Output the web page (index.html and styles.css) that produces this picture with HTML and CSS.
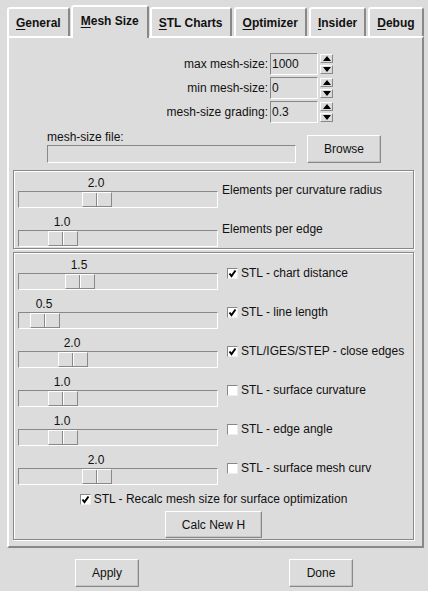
FILE: index.html
```html
<!DOCTYPE html>
<html lang="en">
<head>
  <meta charset="utf-8">
  <title>Meshing Options</title>
  <link rel="stylesheet" href="styles.css">
</head>
<body>
  <div class="dialog">
    <nav class="tabs">
      <div class="tab"><u>G</u>eneral</div>
      <div class="tab active"><u>M</u>esh Size</div>
      <div class="tab"><u>S</u>TL Charts</div>
      <div class="tab"><u>O</u>ptimizer</div>
      <div class="tab"><u>I</u>nsider</div>
      <div class="tab"><u>D</u>ebug</div>
    </nav>

    <main class="page">
      <!-- spin boxes -->
      <div class="spin-grid">
        <label>max mesh-size:</label>
        <div class="entry">1000</div>
        <div class="spin"><span class="arrow up"></span><span class="arrow down"></span></div>

        <label>min mesh-size:</label>
        <div class="entry">0</div>
        <div class="spin"><span class="arrow up"></span><span class="arrow down"></span></div>

        <label>mesh-size grading:</label>
        <div class="entry">0.3</div>
        <div class="spin"><span class="arrow up"></span><span class="arrow down"></span></div>
      </div>

      <div class="file-row">
        <div class="file-field">
          <label>mesh-size file:</label>
          <div class="entry wide"></div>
        </div>
        <button class="btn browse">Browse</button>
      </div>

      <section class="frame">
        <div class="scale-row">
          <div class="scale" style="--pos: 63px">
            <div class="scale-value">2.0</div>
            <div class="trough"><span class="thumb"></span></div>
          </div>
          <span class="scale-label">Elements per curvature radius</span>
        </div>
        <div class="scale-row">
          <div class="scale" style="--pos: 29px">
            <div class="scale-value">1.0</div>
            <div class="trough"><span class="thumb"></span></div>
          </div>
          <span class="scale-label">Elements per edge</span>
        </div>
      </section>

      <section class="frame frame-stl">
        <div class="scale-row">
          <div class="scale" style="--pos: 46px">
            <div class="scale-value">1.5</div>
            <div class="trough"><span class="thumb"></span></div>
          </div>
          <span class="check on"><i class="box"><svg viewBox="0 0 9 9"><path d="M1.5 4.5 L3.5 7 L7.5 1.5"/></svg></i>STL - chart distance</span>
        </div>
        <div class="scale-row">
          <div class="scale" style="--pos: 11px">
            <div class="scale-value">0.5</div>
            <div class="trough"><span class="thumb"></span></div>
          </div>
          <span class="check on"><i class="box"><svg viewBox="0 0 9 9"><path d="M1.5 4.5 L3.5 7 L7.5 1.5"/></svg></i>STL - line length</span>
        </div>
        <div class="scale-row">
          <div class="scale" style="--pos: 39px">
            <div class="scale-value">2.0</div>
            <div class="trough"><span class="thumb"></span></div>
          </div>
          <span class="check on"><i class="box"><svg viewBox="0 0 9 9"><path d="M1.5 4.5 L3.5 7 L7.5 1.5"/></svg></i>STL/IGES/STEP - close edges</span>
        </div>
        <div class="scale-row">
          <div class="scale" style="--pos: 29px">
            <div class="scale-value">1.0</div>
            <div class="trough"><span class="thumb"></span></div>
          </div>
          <span class="check"><i class="box"></i>STL - surface curvature</span>
        </div>
        <div class="scale-row">
          <div class="scale" style="--pos: 29px">
            <div class="scale-value">1.0</div>
            <div class="trough"><span class="thumb"></span></div>
          </div>
          <span class="check"><i class="box"></i>STL - edge angle</span>
        </div>
        <div class="scale-row">
          <div class="scale" style="--pos: 63px">
            <div class="scale-value">2.0</div>
            <div class="trough"><span class="thumb"></span></div>
          </div>
          <span class="check"><i class="box"></i>STL - surface mesh curv</span>
        </div>

        <div class="recalc">
          <span class="check on"><i class="box"><svg viewBox="0 0 9 9"><path d="M1.5 4.5 L3.5 7 L7.5 1.5"/></svg></i>STL - Recalc mesh size for surface optimization</span>
        </div>
        <button class="btn calc">Calc New H</button>
      </section>
    </main>

    <footer class="actions">
      <button class="btn action">Apply</button>
      <button class="btn action">Done</button>
    </footer>
  </div>
</body>
</html>
```

FILE: styles.css
```css
* {
  margin: 0;
  padding: 0;
  box-sizing: border-box;
}

:root {
  --bg: #dcdcdc;
  --light: #ffffff;
  --dark: #888888;
  --text: #111111;
}

body {
  background: var(--bg);
  color: var(--text);
  font-family: "Liberation Sans", Arial, sans-serif;
  font-size: 12px;
  line-height: 14px;
  width: 428px;
  height: 591px;
  overflow: hidden;
}

.dialog {
  padding: 5px 0 0 7px;
  width: 424px;
}

/* Notebook tabs */
.tabs {
  display: flex;
  align-items: flex-end;
  gap: 2px;
  height: 31px;
}

.tab {
  height: 29px;
  padding: 0 7px;
  display: flex;
  align-items: center;
  font-weight: bold;
  border: 2px solid;
  border-color: var(--light) var(--dark) transparent var(--light);
  border-bottom: none;
  border-radius: 3px 3px 0 0;
  background: var(--bg);
}

.tab u {
  text-decoration-thickness: 1px;
  text-underline-offset: 2px;
}

.tab.active {
  position: relative;
  z-index: 1;
  height: 33px;
  margin: 0 -1px -2px;
  padding: 0 8px 3px;
}

.page {
  border: 2px solid;
  border-color: var(--light) var(--dark) var(--dark) var(--light);
  padding-bottom: 6px;
}

/* Spin boxes */
.spin-grid {
  display: grid;
  grid-template-columns: auto 48px 13px;
  column-gap: 2px;
  row-gap: 2px;
  justify-content: end;
  align-items: center;
  padding-right: 89px;
  margin-top: 15px;
}

.spin-grid label {
  text-align: right;
}

.entry {
  height: 22px;
  padding: 3px 1px 0;
  border: 1px solid;
  border-color: var(--dark) var(--light) var(--light) var(--dark);
}

.entry.wide {
  width: 249px;
  height: 18px;
  margin-top: 1px;
}

.spin {
  display: flex;
  flex-direction: column;
  gap: 2px;
}

.arrow {
  position: relative;
  height: 9px;
  border: 1px solid;
  border-color: var(--light) var(--dark) var(--dark) var(--light);
}

.arrow::after {
  content: "";
  position: absolute;
  left: 2px;
  border-left: 4px solid transparent;
  border-right: 4px solid transparent;
}

.arrow.up::after {
  top: 1px;
  border-bottom: 5px solid #000;
}

.arrow.down::after {
  top: 1px;
  border-top: 5px solid #000;
}

/* File row */
.file-row {
  display: flex;
  align-items: flex-end;
  padding-left: 38px;
  margin-top: 7px;
}

.file-field {
  display: flex;
  flex-direction: column;
}

.btn {
  font: inherit;
  color: var(--text);
  background: var(--bg);
  border: 1px solid;
  border-color: var(--light) var(--dark) var(--dark) var(--light);
  box-shadow: inset -1px -1px 0 #c4c4c4;
}

.browse {
  width: 74px;
  height: 28px;
  margin-left: 11px;
}

/* Frames with sliders */
.frame {
  margin: 7px 8px 0 4px;
  padding: 5px 0 1px 4px;
  border: 1px solid var(--dark);
  box-shadow: inset 1px 1px 0 var(--light), 1px 1px 0 var(--light);
  display: flex;
  flex-direction: column;
  gap: 7px;
}

.frame-stl {
  margin-top: 3px;
}

.scale-row {
  display: flex;
  align-items: center;
}

.scale {
  width: 200px;
}

.scale-value {
  width: 30px;
  margin-left: var(--pos);
  text-align: center;
}

.trough {
  display: flex;
  height: 17px;
  margin-top: 1px;
  border: 1px solid;
  border-color: var(--dark) var(--light) var(--light) var(--dark);
}

.thumb {
  width: 30px;
  height: 15px;
  margin-left: var(--pos);
  border: 1px solid;
  border-color: var(--light) var(--dark) var(--dark) var(--light);
  background: linear-gradient(to right, transparent 13px, var(--dark) 13px, var(--dark) 14px, var(--light) 14px, var(--light) 15px, transparent 15px);
}

.scale-label {
  margin: 0 0 4px 4px;
}

.check {
  display: flex;
  align-items: center;
  gap: 3px;
  margin: 0 0 2px 9px;
}

.box {
  display: block;
  width: 11px;
  height: 11px;
  background: #fff;
  border: 1px solid;
  border-color: var(--dark) #eeeeee #eeeeee var(--dark);
}

.box svg {
  display: block;
  width: 9px;
  height: 9px;
  fill: none;
  stroke: #000;
  stroke-width: 2;
}

.recalc {
  display: flex;
  justify-content: center;
  margin-top: 0;
  padding-right: 4px;
}

.recalc .check {
  margin: 0;
}

.calc {
  align-self: center;
  width: 97px;
  height: 27px;
  margin: -2px 4px 0 0;
}

/* Bottom buttons */
.actions {
  display: flex;
  justify-content: space-around;
  margin: 11px 0 0 -7px;
  width: 428px;
}

.action {
  width: 64px;
  height: 28px;
}
```
